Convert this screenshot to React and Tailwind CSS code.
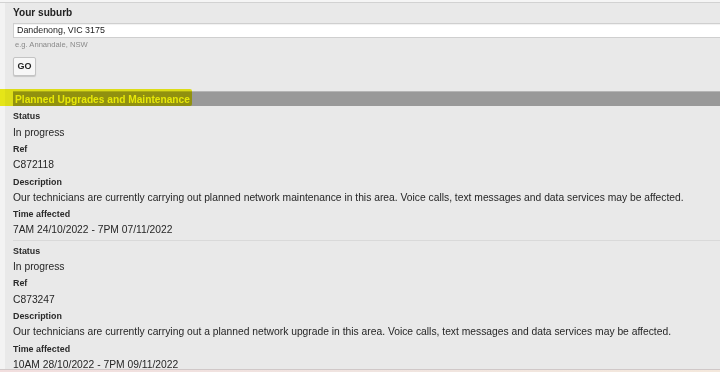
export default function App() {
  const items = [
    {
      status: "In progress",
      ref: "C872118",
      desc: "Our technicians are currently carrying out planned network maintenance in this area. Voice calls, text messages and data services may be affected.",
      time: "7AM 24/10/2022 - 7PM 07/11/2022",
    },
    {
      status: "In progress",
      ref: "C873247",
      desc: "Our technicians are currently carrying out a planned network upgrade in this area. Voice calls, text messages and data services may be affected.",
      time: "10AM 28/10/2022 - 7PM 09/11/2022",
    },
  ];
  const Label = ({ children }) => (
    <div className="text-[8.9px] font-bold leading-[16.3px] text-[#2a2a2a]">{children}</div>
  );
  const Value = ({ children }) => (
    <div className="text-[10.3px] leading-[16.3px] text-[#262626] whitespace-nowrap">{children}</div>
  );
  return (
    <div
      className="relative w-[720px] h-[372px] overflow-hidden bg-[#f3f3f3]"
      style={{ fontFamily: '"Liberation Sans", Arial, sans-serif' }}
    >
      <div className="h-[3px] border-b border-[#d2d2d2] bg-[#f5f5f5]" />
      <div className="ml-[5px] mr-[-4px] bg-[#e9e9e9] pl-[8px] h-[369px] flex flex-col">
        <div className="pt-[3px] text-[10.1px] font-bold leading-[14px] text-[#222]">Your suburb</div>
        <div className="mt-[3px] h-[19px] bg-white border border-[#cfcfcf] shadow-[inset_0_1px_1px_rgba(0,0,0,0.06)] flex items-center pl-[3px] text-[8.9px] text-[#222]">
          Dandenong, VIC 3175
        </div>
        <div className="mt-[2px] text-[7.6px] leading-[10px] text-[#8a8a8a] pl-[2px]">e.g. Annandale, NSW</div>
        <div className="mt-[7px]">
          <div className="w-[23px] h-[19px] flex items-center justify-center bg-[#f7f7f7] border border-[#c4c4c4] rounded-[2px] shadow-[0_1px_1px_rgba(0,0,0,0.15)] text-[9px] font-bold text-[#222]">
            GO
          </div>
        </div>
        <div className="mt-[15px] h-[15px] bg-[#999999] border-t border-[#b5b5b5] flex items-center pl-[2px] text-[10.2px] font-bold text-[#f5f53c]">
          Planned Upgrades and Maintenance
        </div>
        {items.map((it, i) => (
          <div
            key={i}
            className={i === 0 ? "pt-[2px] pb-[1px] border-b border-[#d9d9d9]" : "pt-[2px]"}
          >
            <Label>Status</Label>
            <Value>{it.status}</Value>
            <Label>Ref</Label>
            <Value>{it.ref}</Value>
            <Label>Description</Label>
            <Value>{it.desc}</Value>
            <Label>Time affected</Label>
            <Value>{it.time}</Value>
          </div>
        ))}
      </div>
      <div className="absolute left-0 right-0 bottom-0 h-[3px] border-t border-[#d0c8c8] bg-gradient-to-r from-[#f2dede] via-[#f0e4e0] to-[#f4e8dc]" />
      <div className="absolute left-0 top-[89px] w-[192px] h-[17px] bg-[#f0f000] mix-blend-multiply opacity-90 rounded-r-[2px]" />
    </div>
  );
}
